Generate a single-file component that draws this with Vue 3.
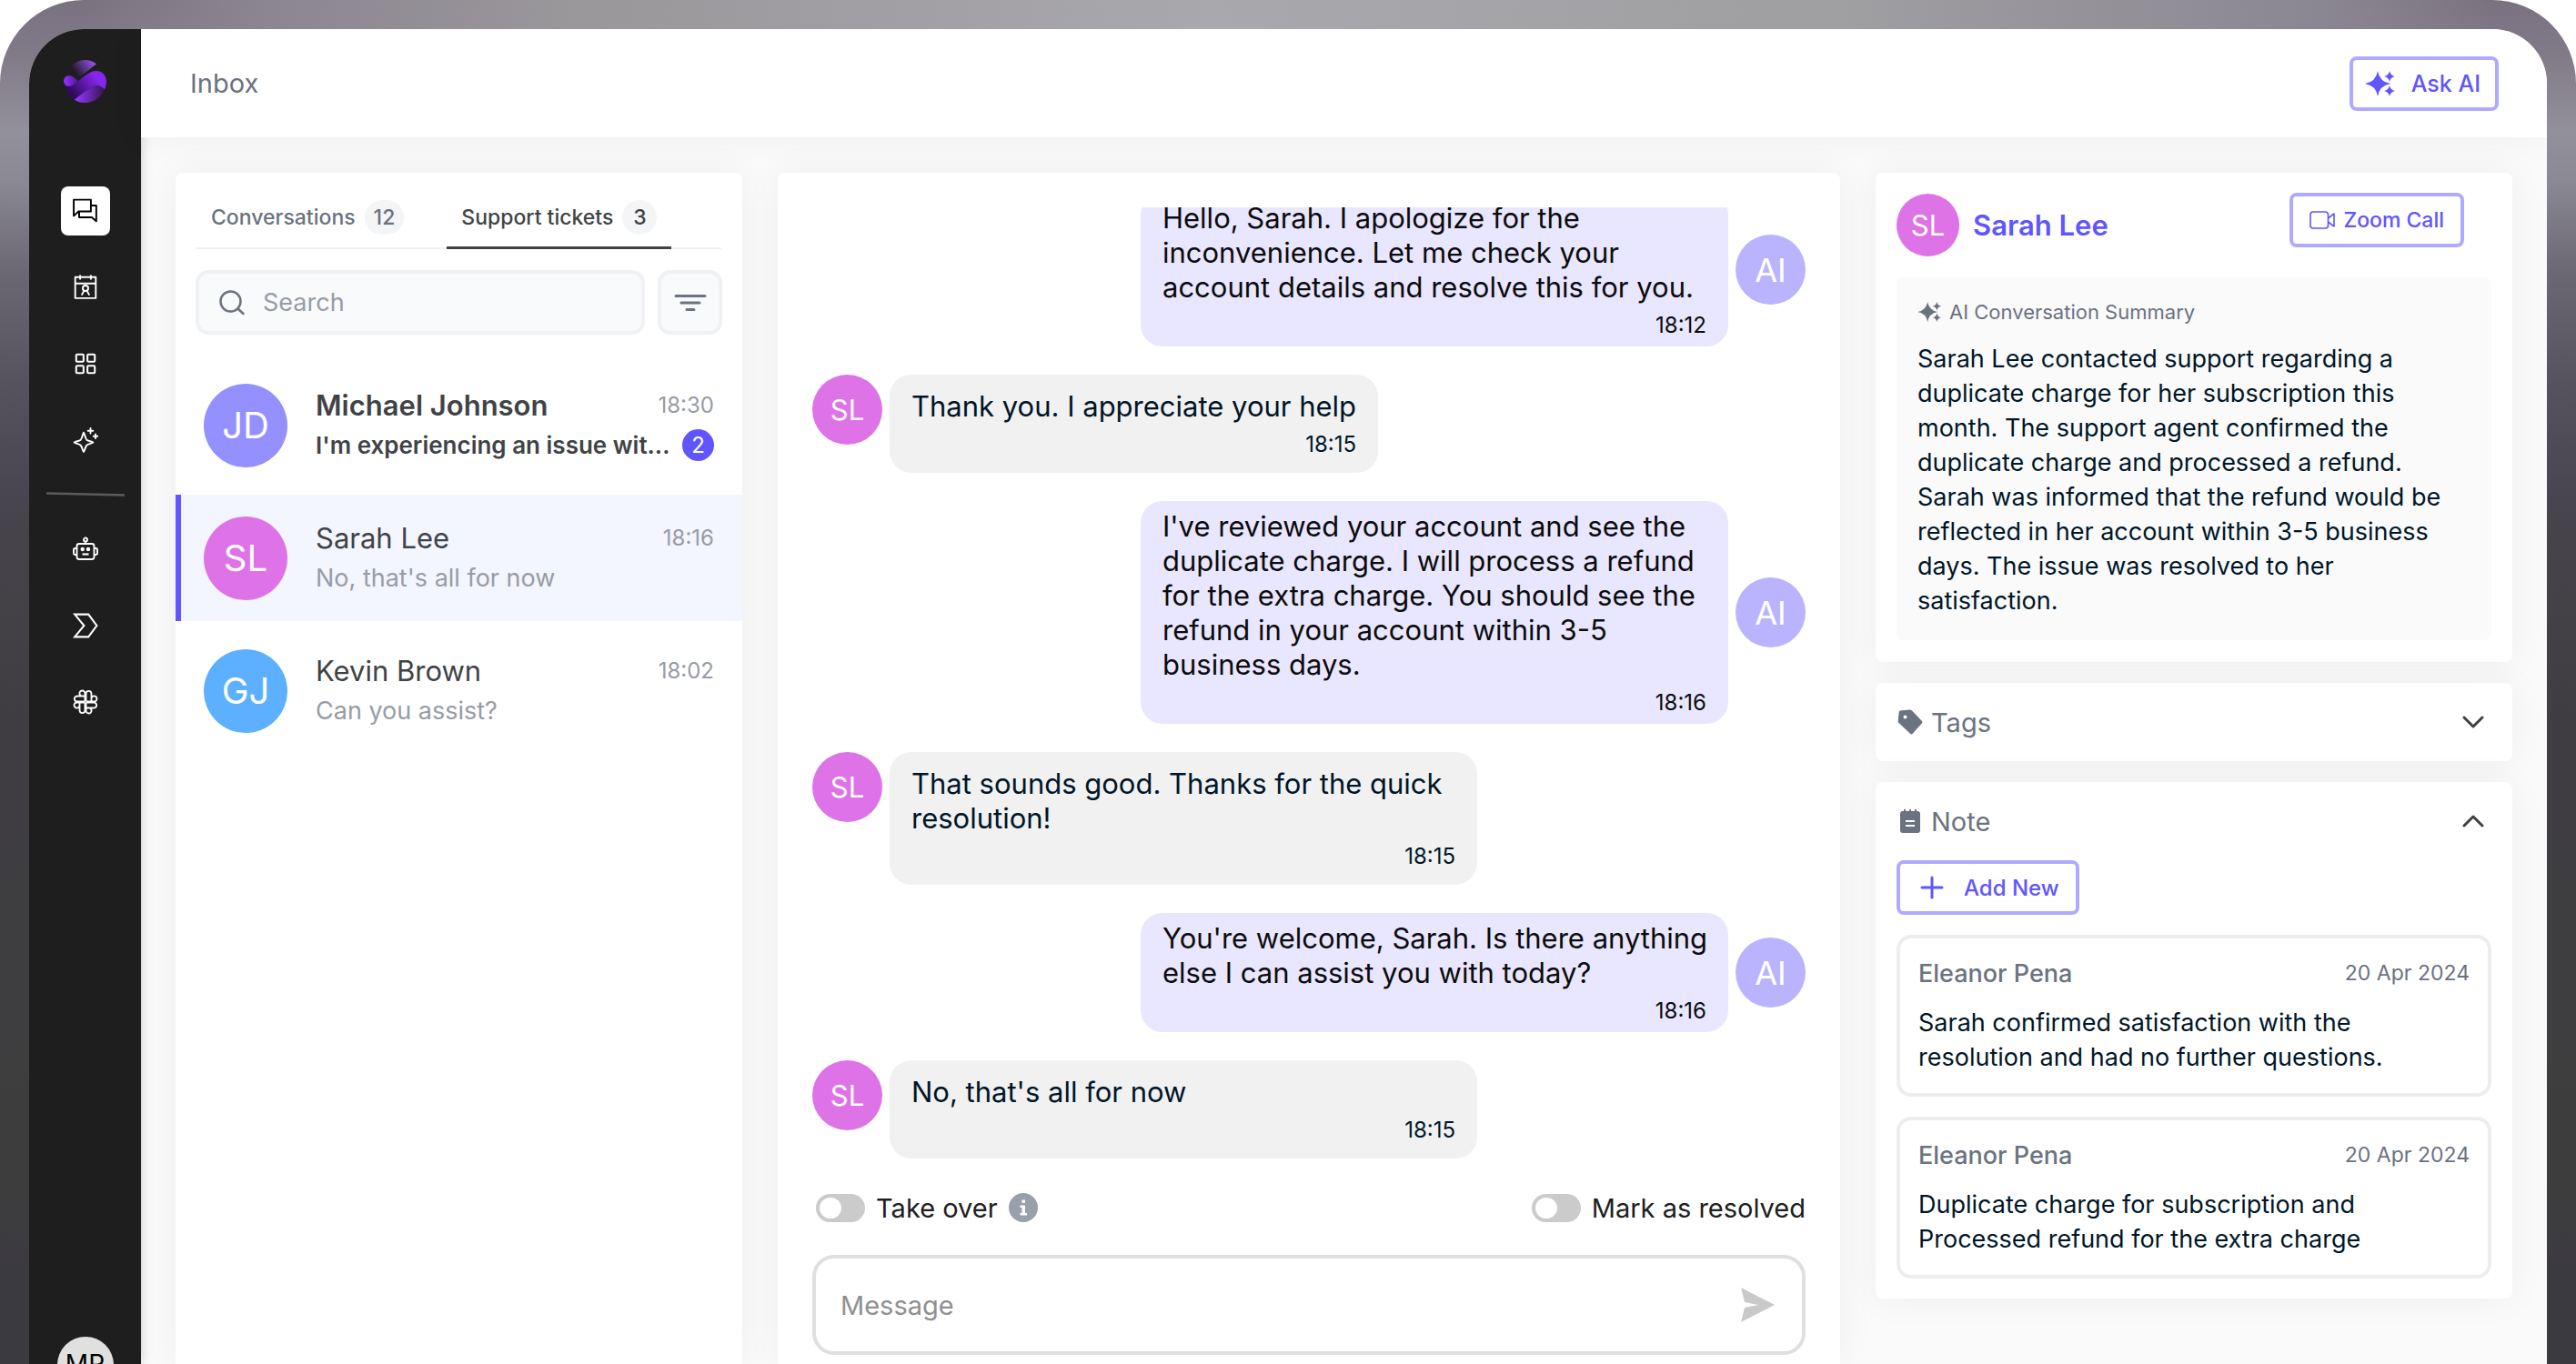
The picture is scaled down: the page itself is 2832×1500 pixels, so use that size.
<script setup>
import { ref } from "vue";

const search = ref("");
const message = ref("");
const takeOver = ref(false);
const resolved = ref(false);

const tickets = [
  { initials: "JD", name: "Michael Johnson", text: "I'm experiencing an issue wit...", time: "18:30", color: "violet", unread: 2 },
  { initials: "SL", name: "Sarah Lee", text: "No, that's all for now", time: "18:16", color: "pink", active: true },
  { initials: "GJ", name: "Kevin Brown", text: "Can you assist?", time: "18:02", color: "blue" },
];

const messages = [
  { from: "ai", text: "Hello, Sarah. I apologize for the inconvenience. Let me check your account details and resolve this for you.", time: "18:12" },
  { from: "user", text: "Thank you. I appreciate your help", time: "18:15", fit: true },
  { from: "ai", text: "I've reviewed your account and see the duplicate charge. I will process a refund for the extra charge. You should see the refund in your account within 3-5 business days.", time: "18:16" },
  { from: "user", text: "That sounds good. Thanks for the quick resolution!", time: "18:15" },
  { from: "ai", text: "You're welcome, Sarah. Is there anything else I can assist you with today?", time: "18:16" },
  { from: "user", text: "No, that's all for now", time: "18:15" },
];

const notes = [
  { author: "Eleanor Pena", date: "20 Apr 2024", text: "Sarah confirmed satisfaction with the resolution and had no further questions." },
  { author: "Eleanor Pena", date: "20 Apr 2024", text: "Duplicate charge for subscription and Processed refund for the extra charge" },
];
</script>

<template>
  <div class="device">
    <div class="screen">
      <nav class="sidebar">
        <a href="#" class="logo" aria-label="Home">
          <svg viewBox="0 0 141 141">
            <defs>
              <linearGradient id="cap" x1="0" y1="0.6" x2="1" y2="0.2">
                <stop offset="0.2" stop-color="#1f1a26" />
                <stop offset="1" stop-color="#9d55f0" />
              </linearGradient>
              <linearGradient id="lobe" x1="0" y1="0" x2="1" y2="0">
                <stop offset="0.2" stop-color="#8c2bf5" />
                <stop offset="1" stop-color="#4a1a86" />
              </linearGradient>
              <linearGradient id="band" x1="0" y1="0.8" x2="1" y2="0.2">
                <stop offset="0.15" stop-color="#2f0b5c" />
                <stop offset="0.8" stop-color="#8526ef" />
              </linearGradient>
              <linearGradient id="base" x1="0" y1="0" x2="1" y2="0">
                <stop offset="0.1" stop-color="#9036f7" />
                <stop offset="1" stop-color="#351552" />
              </linearGradient>
            </defs>
            <path fill="url(#cap)" d="M9 46 C20 16 44 0 70 0 C85 0 98 4 108 13 L76 38 C62 49 54 53 42 56 C32 50 22 47 9 46Z" />
            <path fill="url(#band)" d="M4 82 C12 90 25 88 40 76 C60 60 85 36 108 36 C128 36 141 52 141 71 C141 80 138 90 134 98 C125 84 108 80 92 90 C75 99 55 115 35 131 C18 120 8 105 4 82Z" />
            <path fill="url(#lobe)" d="M16 52 C30 51 38 62 48 69 C36 80 26 87 17 87 C7 87 0 79 0 70 C0 60 7 52 16 52Z" />
            <path fill="url(#base)" d="M35 131 C55 115 75 99 92 90 C108 80 125 84 134 98 C122 125 97 141 70 141 C57 141 45 137 35 131Z" />
          </svg>
        </a>
        <a href="#" class="nav-item active" aria-label="Inbox">
          <svg viewBox="0 0 26 26" fill="none" stroke="#000" stroke-width="1.8" stroke-linejoin="round">
            <path d="M1 1.500H18.500V13.500H6L1 18Z" />
            <path d="M18.500 7.500H24V23.500L19.500 19.500H6.500V13.500" />
          </svg>
        </a>
        <a href="#" class="nav-item" aria-label="Contacts calendar">
          <svg viewBox="0 0 26 26" fill="none" stroke="#fff" stroke-width="1.8" stroke-linejoin="round">
            <path d="M2.500 2.500H23.500V24H2.500ZM2.500 9H23.500M7.500 0.500V5M18.500 0.500V5" />
            <circle cx="13" cy="14" r="2.800" />
            <path d="M9 21L11.300 16.800M17 21L14.700 16.800" />
          </svg>
        </a>
        <a href="#" class="nav-item" aria-label="Dashboard">
          <svg viewBox="0 0 26 26" fill="none" stroke="#fff" stroke-width="1.900">
            <rect x="3.500" y="3.500" width="7.500" height="7.500" rx="1" />
            <rect x="15" y="3.500" width="7.500" height="7.500" rx="1" />
            <rect x="3.500" y="15" width="7.500" height="7.500" rx="1" />
            <rect x="15" y="15" width="7.500" height="7.500" rx="1" />
          </svg>
        </a>
        <a href="#" class="nav-item" aria-label="AI tools">
          <svg viewBox="0 0 28 28" fill="none" stroke="#fff" stroke-width="1.900" stroke-linecap="round" stroke-linejoin="round">
            <path d="M12 5.500C12.800 5.500 13.600 12 15.300 13.700C17 15.200 22.500 15.800 22.500 16.500C22.500 17.300 17 18 15.300 19.700C13.600 21.300 12.800 27 12 27C11.200 27 10.400 21.300 8.700 19.700C7 18 1.500 17.300 1.500 16.500C1.500 15.800 7 15.200 8.700 13.700C10.400 12 11.200 5.500 12 5.500Z" />
            <path d="M19.500 1V6.500M16.700 3.700H22.300M25 7.500V12M22.800 9.700H27.200" />
          </svg>
        </a>
        <svg class="divider" viewBox="0 0 86 5"><path d="M0 1.500L86 3.500" stroke="#5c5c5c" stroke-width="2.500" /></svg>
        <a href="#" class="nav-item" aria-label="Bots">
          <svg viewBox="0 0 28 28" fill="none" stroke="#fff" stroke-width="1.900" stroke-linejoin="round">
            <circle cx="14" cy="3.500" r="2" />
            <path d="M14 5.500V8M4.500 13H2.500C1.500 13 1 13.500 1 14.500V18.500C1 19.500 1.500 20 2.500 20H4.500M23.500 13H25.500C26.500 13 27 13.500 27 14.500V18.500C27 19.500 26.500 20 25.500 20H23.500" />
            <rect x="4.500" y="8" width="19" height="17" rx="2.500" />
            <circle cx="10.700" cy="14" r="1.300" fill="#fff" />
            <circle cx="17" cy="14" r="1.300" fill="#fff" />
            <path d="M10.500 19.500H17.500" stroke-width="2.200" />
          </svg>
        </a>
        <a href="#" class="nav-item" aria-label="Flows">
          <svg viewBox="0 0 26 26" fill="none" stroke="#fff" stroke-width="1.900">
            <path d="M2 1.500H16L24.500 13L16 24.500H2L11.500 13Z" />
          </svg>
        </a>
        <a href="#" class="nav-item" aria-label="Integrations">
          <svg viewBox="0 0 26 26" fill="none" stroke="#fff" stroke-width="1.700">
            <path d="M12.500 12.500H4A2.800 2.800 0 0 1 4 7H12.500M9.800 7A2.800 2.800 0 1 1 12.500 4.200V12.500M13.500 12.500V4A2.800 2.800 0 0 1 19 4V12.500M19 9.800A2.800 2.800 0 1 1 21.800 12.500H13.500M13.500 13.500H22A2.800 2.800 0 0 1 22 19H13.500M16.200 19A2.800 2.800 0 1 1 13.500 21.800V13.500M12.500 13.500V22A2.800 2.800 0 0 1 7 22V13.500M7 16.200A2.800 2.800 0 1 1 4.200 13.500H12.500" />
          </svg>
        </a>
        <div class="profile">MR</div>
      </nav>

      <div class="content">
        <header class="topbar">
          <h1>Inbox</h1>
          <button type="button" class="btn ask">
            <svg class="ask-icon" viewBox="0 0 34 28" fill="#6055ff">
              <path d="M14 0Q16 12 28 14Q16 16 14 28Q12 16 0 14Q12 12 14 0ZM27 0Q28 5 33 6Q28 7 27 12Q26 7 21 6Q26 5 27 0ZM27 16Q28 21 33 22Q28 23 27 28Q26 23 21 22Q26 21 27 16Z" />
            </svg>
            Ask AI
          </button>
        </header>

        <main class="columns">
          <section class="card list">
            <div class="tabs">
              <button type="button" class="tab">Conversations <span class="count">12</span></button>
              <button type="button" class="tab selected">Support tickets <span class="count">3</span></button>
            </div>
            <div class="search-row">
              <label class="search">
                <svg viewBox="0 0 28 28" fill="none" stroke="#6b7280" stroke-width="2.500" stroke-linecap="round">
                  <circle cx="12.500" cy="12.500" r="11" />
                  <path d="M20.500 20.500L26.500 26" />
                </svg>
                <input v-model="search" type="text" placeholder="Search" aria-label="Search" />
              </label>
              <button type="button" class="filter" aria-label="Filter">
                <svg viewBox="0 0 36 20" stroke="#6b7280" stroke-width="3" stroke-linecap="round">
                  <path d="M2 2.500H34M8 10H28M14 17.500H22" />
                </svg>
              </button>
            </div>
            <ul class="tickets">
              <li v-for="t in tickets" :key="t.name" class="ticket" :class="{ active: t.active, unread: t.unread }">
                <span class="avatar large" :class="t.color">{{ t.initials }}</span>
                <div class="ticket-body">
                  <div class="ticket-row">
                    <span class="ticket-name">{{ t.name }}</span>
                    <time>{{ t.time }}</time>
                  </div>
                  <div class="ticket-row">
                    <span class="ticket-text">{{ t.text }}</span>
                    <span v-if="t.unread" class="unread-count">{{ t.unread }}</span>
                  </div>
                </div>
              </li>
            </ul>
          </section>

          <section class="card chat">
            <div class="messages">
              <div v-for="(m, i) in messages" :key="i" class="message" :class="[m.from, { fit: m.fit }]">
                <span class="avatar medium" :class="m.from === 'ai' ? 'lilac' : 'pink'">{{ m.from === "ai" ? "AI" : "SL" }}</span>
                <div class="bubble">
                  <p>{{ m.text }}</p>
                  <time>{{ m.time }}</time>
                </div>
              </div>
            </div>
            <div class="toggles">
              <label class="toggle">
                <input v-model="takeOver" type="checkbox" class="switch" />
                Take over
                <svg class="info" viewBox="0 0 32 32">
                  <circle cx="16" cy="16" r="16" fill="#98a0ab" />
                  <path d="M14.500 7.500H18V11H14.500ZM12.500 13.500H18V22H20V24.500H12.500V22H14.500V16H12.500Z" fill="#fff" />
                </svg>
              </label>
              <label class="toggle">
                <input v-model="resolved" type="checkbox" class="switch" />
                Mark as resolved
              </label>
            </div>
            <form class="composer" @submit.prevent>
              <input v-model="message" type="text" placeholder="Message" aria-label="Message" />
              <button type="submit" aria-label="Send">
                <svg viewBox="0 0 38 38" fill="#c9c9c9"><path d="M1 0L38 19L1 38L5 22L20 19L5 16Z" /></svg>
              </button>
            </form>
          </section>

          <aside class="details">
            <section class="card contact">
              <div class="contact-head">
                <span class="avatar small pink">SL</span>
                <h2>Sarah Lee</h2>
                <button type="button" class="btn zoom">
                  <svg class="zoom-icon" viewBox="0 0 28 20" fill="none" stroke="#6055ff" stroke-width="1.600" stroke-linejoin="round">
                    <rect x="1" y="1" width="19.500" height="18" rx="3" />
                    <path d="M20.500 8L27 3V17L20.500 12" />
                  </svg>
                  Zoom Call
                </button>
              </div>
              <div class="summary">
                <h3>
                  <svg class="summary-icon" viewBox="0 0 34 28" fill="#6b7280">
                    <path d="M14 0Q16 12 28 14Q16 16 14 28Q12 16 0 14Q12 12 14 0ZM27 0Q28 5 33 6Q28 7 27 12Q26 7 21 6Q26 5 27 0ZM27 16Q28 21 33 22Q28 23 27 28Q26 23 21 22Q26 21 27 16Z" />
                  </svg>
                  AI Conversation Summary
                </h3>
                <p>
                  Sarah Lee contacted support regarding a duplicate charge for her subscription this month. The support
                  agent confirmed the duplicate charge and processed a refund. Sarah was informed that the refund would
                  be reflected in her account within 3-5 business days. The issue was resolved to her satisfaction.
                </p>
              </div>
            </section>

            <section class="card fold">
              <button type="button" class="fold-head" aria-expanded="false">
                <svg class="fold-icon" viewBox="0 0 30 30" fill="#6b7280">
                  <path fill-rule="evenodd" d="M4 2.500L14.500 1.500Q16 1.500 17 2.500L28 14Q29 15.200 28 16.300L17.500 28Q16.300 29 15 27.800L2.500 16Q1.500 15 1.700 13.500L2.700 4Q2.900 2.700 4 2.500ZM9.500 7.500A2 2 0 1 0 9.500 11.500A2 2 0 1 0 9.500 7.500Z" />
                </svg>
                Tags
                <svg class="chevron" viewBox="0 0 24 14" fill="none" stroke="#404040" stroke-width="3" stroke-linecap="round" stroke-linejoin="round">
                  <path d="M2 2L12 12L22 2" />
                </svg>
              </button>
            </section>

            <section class="card fold">
              <button type="button" class="fold-head" aria-expanded="true">
                <svg class="fold-icon" viewBox="0 0 30 30">
                  <path fill="#6b7280" d="M7 4H8V2H10V4H14V2H16V4H20V2H22V4H23Q26 4 26 7V25Q26 28 23 28H7Q4 28 4 25V7Q4 4 7 4Z" />
                  <path d="M10 15H20M10 20H20" stroke="#fff" stroke-width="2" />
                </svg>
                Note
                <svg class="chevron" viewBox="0 0 24 14" fill="none" stroke="#404040" stroke-width="3" stroke-linecap="round" stroke-linejoin="round">
                  <path d="M2 12L12 2L22 12" />
                </svg>
              </button>
              <button type="button" class="btn add">
                <svg class="add-icon" viewBox="0 0 26 26" stroke="#6055ff" stroke-width="3" stroke-linecap="round">
                  <path d="M13 2V24M2 13H24" />
                </svg>
                Add New
              </button>
              <article v-for="(n, i) in notes" :key="i" class="note">
                <div class="note-head">
                  <h4>{{ n.author }}</h4>
                  <time>{{ n.date }}</time>
                </div>
                <p>{{ n.text }}</p>
              </article>
            </section>
          </aside>
        </main>
      </div>
    </div>
  </div>
</template>

<style>
body {
  margin: 0;
  background: #fff;
}
</style>

<style scoped>
* {
  box-sizing: border-box;
}
h1,
h2,
h3,
h4,
p,
ul {
  margin: 0;
  padding: 0;
  font-weight: 400;
}
button,
input {
  font: inherit;
  color: inherit;
  border: none;
  background: none;
  padding: 0;
  outline: none;
}
svg {
  display: block;
  flex: none;
}
.device {
  height: 100vh;
  overflow: hidden;
  padding: 32px 32px 0;
  border-radius: 92px 92px 0 0;
  font-family: Inter, "Liberation Sans", sans-serif;
  background:
    linear-gradient(90deg, rgba(125, 118, 132, 0) 92px, #8b8590 10%, #9a979b 22%, #a9a8ac 47%, #9f9ea1 72%, #8b8792 90%, rgba(125, 118, 132, 0) calc(100% - 92px)) top / 100% 32px no-repeat,
    linear-gradient(180deg, #7b7280 0, #7f7886 50px, #92909a 145px, #8a8893 200px, #6b6874 300px, #56535e 420px, #4a4753 530px, #47434a 580px, #3f3d42 800px, #3d3d3d 1300px, #3c3a41 1400px);
}
.screen {
  display: flex;
  height: 100%;
  border-radius: 60px 60px 0 0;
  overflow: hidden;
  background: #fafafa;
}

/* sidebar */
.sidebar {
  width: 123px;
  flex: none;
  display: flex;
  flex-direction: column;
  align-items: center;
  background: #1e1e1e;
  padding-top: 34px;
  box-shadow: 0 0 12px rgba(0, 0, 0, 0.2);
}
.logo {
  width: 47px;
  height: 47px;
  margin-bottom: 92px;
}
.nav-item {
  width: 54px;
  height: 54px;
  margin-bottom: 30px;
  border-radius: 8px;
  display: flex;
  align-items: center;
  justify-content: center;
}
.nav-item svg {
  width: 28px;
  height: 28px;
}
.nav-item.active {
  background: #fff;
}
.divider {
  width: 86px;
  height: 5px;
  margin-bottom: 31px;
}
.profile {
  width: 62px;
  height: 62px;
  margin-top: auto;
  margin-bottom: -32px;
  flex: none;
  border-radius: 50%;
  background: #e0e0e0;
  color: #000;
  font-size: 28px;
  line-height: 60px;
  text-align: center;
}

/* topbar */
.content {
  flex: 1;
  min-width: 0;
  display: flex;
  flex-direction: column;
}
.topbar {
  height: 119px;
  flex: none;
  display: flex;
  align-items: center;
  justify-content: space-between;
  padding: 0 53px 0 54px;
  background: #fff;
  box-shadow: 0 0 40px rgba(0, 0, 0, 0.05);
}
.topbar h1 {
  font-size: 29px;
  color: #6b7280;
}
.btn {
  display: flex;
  align-items: center;
  height: 60px;
  border: 4px solid #afaaff;
  border-radius: 8px;
  background: #fff;
  color: #6055ff;
  font-size: 24px;
  font-weight: 500;
}
.ask {
  padding: 0 16px 0 13px;
  gap: 17px;
  font-size: 25px;
}
.ask-icon {
  width: 34px;
  height: 28px;
}

/* columns */
.columns {
  flex: 1;
  min-height: 0;
  display: grid;
  grid-template-columns: 623fr 1168fr 700fr;
  gap: 39px;
  padding: 39px 38px 0;
}
.card {
  background: #fff;
  border-radius: 8px;
  box-shadow: 0 0 40px rgba(0, 0, 0, 0.05);
  min-width: 0;
}
.list,
.chat {
  border-radius: 8px 8px 0 0;
}

/* avatars */
.avatar {
  flex: none;
  border-radius: 50%;
  display: flex;
  align-items: center;
  justify-content: center;
  color: #fff;
}
.large {
  width: 92px;
  height: 92px;
  font-size: 40px;
}
.medium {
  width: 77px;
  height: 77px;
  font-size: 31px;
}
.small {
  width: 69px;
  height: 69px;
  font-size: 31px;
}
.violet {
  background: #9490ff;
}
.pink {
  background: #de73e8;
}
.blue {
  background: #5cb0ff;
}
.lilac {
  background: #bab4ff;
  font-size: 36px;
}

/* ticket list */
.tabs {
  display: flex;
  height: 84px;
  margin: 0 23px 23px;
  border-bottom: 2px solid #eff0f4;
  gap: 31px;
}
.tab {
  display: flex;
  align-items: center;
  gap: 10px;
  height: 84px;
  padding: 16px 16px 0;
  border-bottom: 3px solid transparent;
  font-size: 23px;
  font-weight: 500;
  color: #6b7280;
}
.tab.selected {
  color: #404348;
  border-color: #404348;
}
.count {
  min-width: 38px;
  height: 38px;
  padding: 0 10px;
  border-radius: 20px;
  background: #f4f5f7;
  line-height: 38px;
  text-align: center;
}
.search-row {
  display: flex;
  gap: 14px;
  margin: 0 22px;
}
.search,
.filter {
  height: 71px;
  display: flex;
  align-items: center;
  border: 4px solid #f0f1f5;
  border-radius: 14px;
  background: #f9fafc;
}
.search {
  flex: 1;
  min-width: 0;
  padding-left: 22px;
  gap: 20px;
  font-size: 27px;
}
.search svg {
  width: 28px;
  height: 28px;
}
.search input {
  flex: 1;
  min-width: 0;
}
.search input::placeholder {
  color: #979ca6;
}
.filter {
  width: 71px;
  justify-content: center;
}
.filter svg {
  width: 36px;
  height: 20px;
}
.tickets {
  list-style: none;
  margin-top: 30px;
  display: flex;
  flex-direction: column;
  gap: 7px;
}
.ticket {
  display: flex;
  align-items: center;
  gap: 31px;
  height: 139px;
  padding: 0 31px 0 25px;
  border-left: 6px solid transparent;
}
.ticket.active {
  background: #f3f5ff;
  border-color: #6055ff;
}
.ticket-body {
  flex: 1;
  min-width: 0;
}
.ticket-row {
  display: flex;
  align-items: center;
  justify-content: space-between;
  height: 44px;
}
.ticket-name {
  font-size: 31px;
  color: #3f4347;
}
.ticket time {
  font-size: 24px;
  color: #979ca6;
}
.ticket-text {
  font-size: 27px;
  color: #979ca6;
  white-space: nowrap;
}
.unread .ticket-name,
.unread .ticket-text {
  font-weight: 600;
  color: #3f4347;
}
.unread .ticket-text {
  font-size: 26px;
}
.unread-count {
  flex: none;
  width: 35px;
  height: 35px;
  border-radius: 50%;
  background: #6055ff;
  color: #fff;
  font-size: 24px;
  line-height: 35px;
  text-align: center;
}

/* chat */
.chat {
  display: flex;
  flex-direction: column;
  min-height: 0;
  padding: 38px 38px 10px;
}
.messages {
  flex: 1;
  min-height: 0;
  overflow: hidden;
  display: flex;
  flex-direction: column;
  justify-content: flex-end;
  gap: 31px;
}
.message {
  flex: none;
  display: flex;
  align-items: flex-start;
  gap: 8px;
}
.message.ai {
  flex-direction: row-reverse;
  align-items: center;
}
.bubble {
  width: 646px;
  padding: 16px 24px;
  border-radius: 24px;
  background: #f1f1f1;
  color: #001628;
  font-size: 31px;
  line-height: 38px;
}
.fit .bubble {
  width: auto;
}
.ai .bubble {
  padding: 9px 16px 8px 24px;
  background: #e9e6ff;
  color: #0c0c0c;
}
.bubble time {
  display: block;
  margin-top: 8px;
  font-size: 24px;
  line-height: 30px;
  text-align: right;
}
.ai .bubble time {
  padding-right: 8px;
}
.toggles {
  display: flex;
  justify-content: space-between;
  padding-left: 4px;
  margin: 34px 0 32px;
}
.toggle {
  display: flex;
  align-items: center;
  gap: 12px;
  height: 40px;
  font-size: 29px;
  color: #202020;
}
.switch {
  appearance: none;
  width: 54px;
  height: 31px;
  margin: 0;
  padding: 4px;
  border-radius: 16px;
  background: #cbcbcb;
}
.switch::before {
  content: "";
  display: block;
  width: 24px;
  height: 23px;
  border-radius: 50%;
  background: #fff;
}
.switch:checked::before {
  margin-left: auto;
}
.info {
  width: 32px;
  height: 32px;
}
.composer {
  display: flex;
  align-items: center;
  flex: none;
  height: 110px;
  padding: 0 30px 0 27px;
  border: 4px solid #dfdfdf;
  border-radius: 24px;
}
.composer input {
  flex: 1;
  min-width: 0;
  font-size: 29px;
}
.composer input::placeholder {
  color: #909090;
}
.composer svg {
  width: 38px;
  height: 38px;
}

/* details */
.details {
  display: flex;
  flex-direction: column;
  gap: 23px;
  min-width: 0;
}
.contact {
  padding: 22px 23px 24px;
}
.contact-head {
  display: flex;
  align-items: center;
  height: 70px;
  padding-right: 30px;
  margin-bottom: 23px;
}
.contact-head h2 {
  flex: 1;
  margin-left: 15px;
  font-size: 31px;
  font-weight: 600;
  color: #6055ff;
}
.zoom {
  align-self: flex-start;
  padding: 0 18px;
  gap: 9px;
  font-size: 23px;
}
.zoom-icon {
  width: 28px;
  height: 20px;
}
.summary {
  padding: 19px 23px 24px;
  border-radius: 8px;
  background: #fafafa;
}
.summary h3 {
  display: flex;
  align-items: center;
  gap: 8px;
  height: 38px;
  margin-bottom: 14px;
  font-size: 22px;
  color: #6b7280;
}
.summary-icon {
  width: 27px;
  height: 22px;
}
.summary p,
.note p {
  padding-right: 16px;
  font-size: 27px;
  line-height: 38px;
  color: #001628;
}
.fold {
  padding: 0 23px;
}
.fold-head {
  display: flex;
  align-items: center;
  width: 100%;
  height: 86px;
  padding-right: 8px;
  gap: 8px;
  font-size: 29px;
  color: #6b7280;
}
.fold-icon {
  width: 30px;
  height: 30px;
}
.chevron {
  width: 24px;
  height: 14px;
  margin-left: auto;
}
.add {
  padding: 0 18px 0 22px;
  gap: 22px;
  margin-bottom: 22px;
}
.add-icon {
  width: 26px;
  height: 26px;
}
.note {
  height: 178px;
  margin-bottom: 22px;
  padding: 19px 20px 18px;
  border: 4px solid #ededed;
  border-radius: 16px;
}
.note-head {
  display: flex;
  align-items: center;
  justify-content: space-between;
  height: 38px;
  margin-bottom: 17px;
  color: #6b7280;
}
.note-head h4 {
  font-size: 27px;
  font-weight: 500;
}
.note-head time {
  font-size: 23px;
}
</style>
